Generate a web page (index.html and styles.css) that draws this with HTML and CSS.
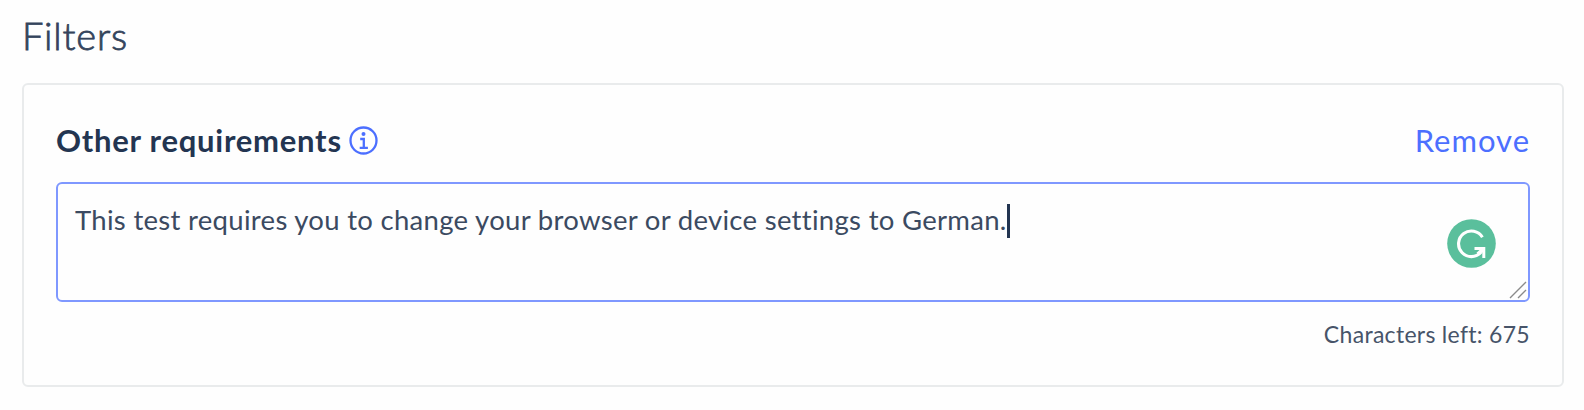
FILE: index.html
```html
<!DOCTYPE html>
<html lang="en">
<head>
    <meta charset="UTF-8">
    <meta name="viewport" content="width=device-width, initial-scale=1.0">
    <title>Filters</title>
    <link rel="stylesheet" href="styles.css">
</head>
<body>
    <h1 class="page-title">Filters</h1>

    <section class="filter-card">
        <div class="filter-header">
            <h2 class="filter-title">Other requirements</h2>
            <svg class="info-icon" width="29" height="29" viewBox="0 0 29 29" fill="none" stroke="currentColor" stroke-width="2.3">
                <circle cx="14.5" cy="14.5" r="13"/>
                <circle cx="14.5" cy="8" r="2" fill="currentColor" stroke="none"/>
                <path d="M11.2 13h3.6v8.8M10.7 21.9h8.2"/>
            </svg>
            <a class="filter-remove">Remove</a>
        </div>

        <div class="filter-input" role="textbox" aria-multiline="true">
            <span class="filter-text">This test requires you to change your browser or device settings to German.</span><i class="caret"></i>
            <svg class="grammar-badge" width="49" height="49" viewBox="0 0 49 49">
                <circle cx="24.5" cy="24.5" r="24.3" fill="#5abf9c"/>
                <path d="M35.4 18.3A12.8 12.8 0 1 0 34 33.2" fill="none" stroke="#fff" stroke-width="3.1"/>
                <path d="M27.5 28h10.8v11h-3v-5.6l-3.6 2.8-2.2-2.4 3-2.8h-5z" fill="#fff"/>
            </svg>
            <svg class="resize-grip" width="18" height="18" viewBox="0 0 18 18" fill="none" stroke="#8a8a8a" stroke-width="1.4">
                <path d="M1 17L17 1M9 17l8-8"/>
            </svg>
        </div>

        <p class="chars-left">Characters left: 675</p>
    </section>
</body>
</html>
```
FILE: styles.css
```css
:root {
    --color-text: #233551;
    --color-muted: #475469;
    --color-link: #4c6fff;
    --color-border: #e9ebec;
    --font-default: Lato, 'Liberation Sans', sans-serif;
}

* {
    box-sizing: border-box;
}

body {
    margin: 0;
    padding: 13px 20px 0 22px;
    background-color: #fefefe;
    color: var(--color-text);
    font-family: var(--font-default);
}

h1, h2, p {
    margin: 0;
}

.page-title {
    height: 70px;
    color: #34445c;
    font-size: 38px;
    font-weight: 300;
    line-height: 44px;
    letter-spacing: 0.8px;
    -webkit-text-stroke: 0.8px #34445c;
}

/* Card */
.filter-card {
    height: 304px;
    padding: 38px 32px 0 32px;
    border: 2px solid var(--color-border);
    border-radius: 6px;
}

.filter-header {
    display: flex;
    align-items: center;
    height: 34px;
    margin-bottom: 25px;
    line-height: 34px;
}

.filter-title {
    font-size: 31px;
    font-weight: 700;
    letter-spacing: 0.75px;
    white-space: nowrap;
}

.info-icon {
    margin-left: 7px;
    color: var(--color-link);
}

.filter-remove {
    margin-left: auto;
    color: var(--color-link);
    font-size: 31px;
    letter-spacing: 1px;
}

/* Text field */
.filter-input {
    position: relative;
    display: flex;
    height: 120px;
    padding: 19px 17px;
    border: 2px solid #7f98ff;
    border-radius: 6px;
    color: #3b4a61;
    font-size: 27.5px;
    line-height: 34px;
    letter-spacing: 0.3px;
    white-space: nowrap;
}

.caret {
    width: 3px;
    height: 34px;
    margin-top: 1px;
    background-color: var(--color-text);
}

.grammar-badge {
    position: absolute;
    top: 35px;
    right: 32px;
}

.resize-grip {
    position: absolute;
    right: 1px;
    bottom: 1px;
}

.chars-left {
    margin-top: 17px;
    color: var(--color-muted);
    font-size: 23px;
    line-height: 30px;
    letter-spacing: 0.3px;
    text-align: right;
}
```
